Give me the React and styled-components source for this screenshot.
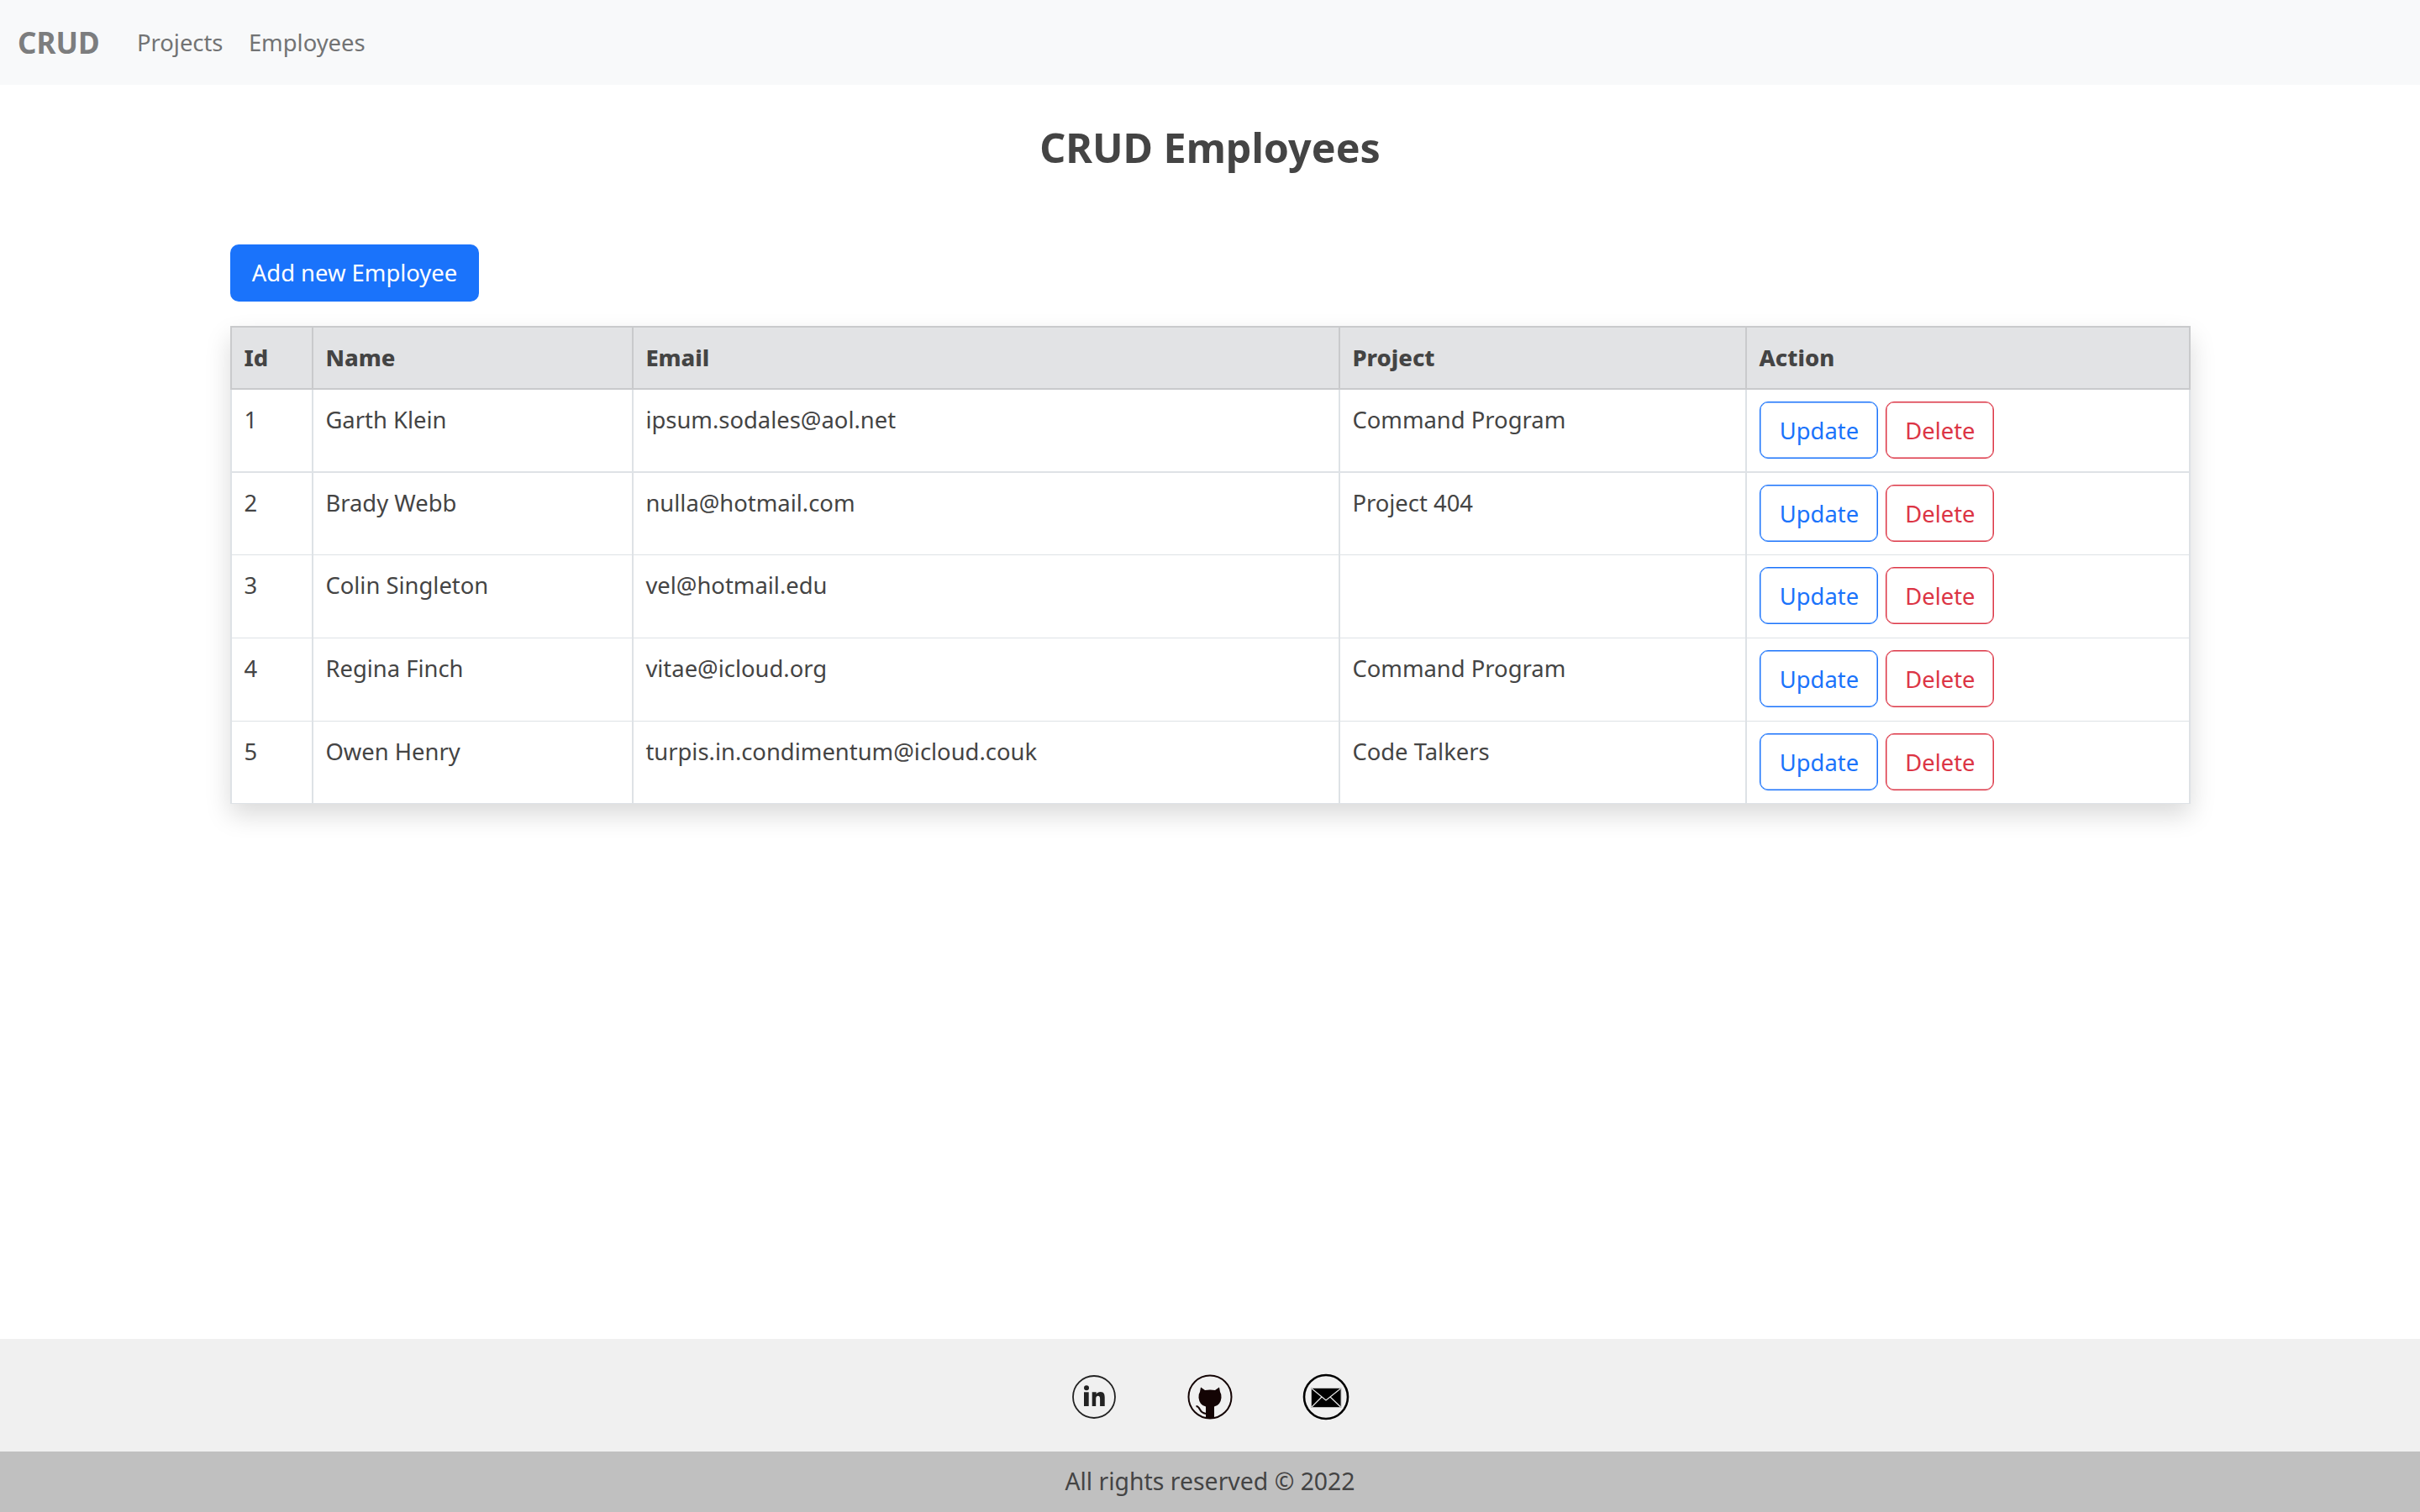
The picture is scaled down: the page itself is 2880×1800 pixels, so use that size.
import React from "react";
import styled, { createGlobalStyle } from "styled-components";

const FONT = `"Noto Sans", "Lato", sans-serif`;

const Global = createGlobalStyle`
  html, body { margin: 0; padding: 0; background: #fff; }
  body { font-family: ${FONT}; font-size: 27.4px; font-weight: 400; line-height: 43.2px; color: #444; }
  * { box-sizing: border-box; }
`;
const Page = styled.div`
  min-height: 1800px;
  display: flex;
  flex-direction: column;
`;
const Navbar = styled.nav`
  height: 101px;
  background: #f8f9fa;
  display: flex;
  align-items: center;
  padding-left: 21px;
`;
const Brand = styled.a`
  font-size: 35px;
  font-weight: 700;
  color: #7c7d7e;
  margin-right: 30px;
`;
const NavLink = styled.a`
  color: #727374;
  margin: 0 16px 0 14.4px;
`;
const Main = styled.main`
  flex: 1;
  padding: 0 274px;
`;
const Title = styled.h2`
  margin: 0;
  padding-top: 42px;
  height: 190px;
  text-align: center;
  font-size: 48.4px;
  line-height: 65px;
  font-weight: 700;
  color: #444;
`;
const AddButton = styled.button`
  display: block;
  height: 68px;
  width: 296px;
  padding: 0;
  border: 0;
  border-radius: 10px;
  background: #1a73fb;
  color: #fff;
  font: inherit;
`;
const Table = styled.table`
  width: 2331px;
  margin-top: 29px;
  border-collapse: collapse;
  table-layout: fixed;
  box-shadow: 0 14.4px 28.8px rgba(0, 0, 0, 0.15);
`;
const Head = styled.th`
  height: 74px;
  padding: 0 14.4px;
  background: #e2e3e5;
  border: 2px solid #c9cacc;
  text-align: left;
  font-weight: 800;
  color: #444;
`;
const Row = styled.tr`
  height: ${(p) => p.$h}px;
`;
const Cell = styled.td`
  padding: 14.4px;
  vertical-align: top;
  border-left: 2px solid #dee2e6;
  border-right: 2px solid #dee2e6;
  border-bottom: ${(p) => (p.$first ? 2 : 1)}px solid #dee2e6;
  color: #444;
`;
const ActionGroup = styled.div`
  display: flex;
  gap: 9px;
  padding-left: 1px;
`;
const Outline = styled.button`
  height: 68px;
  width: ${(p) => p.$w}px;
  padding: 0;
  border: 1px solid ${(p) => p.$c};
  box-shadow: inset 0 0 0 0.5px ${(p) => p.$c};
  border-radius: 10px;
  background: transparent;
  color: ${(p) => p.$c};
  font: inherit;
`;
const Social = styled.div`
  height: 134px;
  padding-top: 4px;
  background: #f0f0f0;
  display: flex;
  justify-content: center;
  align-items: center;
  gap: 84px;
`;
const Copy = styled.footer`
  height: 72px;
  background: #c0c0c0;
  display: flex;
  justify-content: center;
  align-items: center;
  color: #444;
  font-size: 28.4px;
`;

const LinkedIn = () => (
  <svg width="54" height="54" viewBox="0 0 54 54">
    <circle cx="27" cy="27" r="25" fill="none" stroke="#222" strokeWidth="1.8" />
    <circle cx="18" cy="16.3" r="3" fill="#222" />
    <rect x="15" y="21.3" width="5.7" height="16.7" fill="#222" />
    <path d="M24.7 21.3h5v2.4c1-1.8 2.8-2.8 5-2.8 4 0 5 2.8 5 6.6V38h-5.6v-9c0-2-.6-3.3-2.3-3.3s-2.6 1.3-2.6 3.3v9h-4.500z" fill="#222" />
  </svg>
);
const GitHub = () => (
  <svg width="54" height="54" viewBox="0 0 54 54">
    <defs>
      <clipPath id="gh"><circle cx="27" cy="27" r="25.5" /></clipPath>
    </defs>
    <circle cx="27" cy="27" r="25.5" fill="none" stroke="#140404" strokeWidth="2" />
    <g clipPath="url(#gh)">
      <path fill="#140404" d="M16 15.5L21 19Q27 18 33 19L38 15.5L39 21Q41 24 40.5 28Q39.5 37 32 38.5V53H22V38.5Q14.5 37 13.5 28Q13 24 15 21Z" />
      <path fill="none" stroke="#140404" strokeWidth="2" d="M10.5 38Q13 38 15 42Q17 46 22 47" />
    </g>
  </svg>
);
const Mail = () => (
  <svg width="54" height="54" viewBox="1 1 54 54" overflow="visible">
    <circle cx="28" cy="28" r="26" fill="#f0f0f0" stroke="#000" strokeWidth="2.6" />
    <rect x="10.5" y="17.5" width="35.5" height="23" fill="#000" stroke="#bbb" strokeWidth="1" />
    <path d="M11 18L28 32L45.5 18M11 40L23 28M45.5 40L33 28" fill="none" stroke="#e8e8e8" strokeWidth="1.2" />
  </svg>
);

const rows = [
  [1, "Garth Klein", "ipsum.sodales@aol.net", "Command Program"],
  [2, "Brady Webb", "nulla@hotmail.com", "Project 404"],
  [3, "Colin Singleton", "vel@hotmail.edu", ""],
  [4, "Regina Finch", "vitae@icloud.org", "Command Program"],
  [5, "Owen Henry", "turpis.in.condimentum@icloud.couk", "Code Talkers"],
];
const cols = [97, 381, 841, 484, 528];
const rowHeights = [99, 98, 99, 99, 98];

export default function App() {
  return (
    <Page>
      <Global />
      <Navbar>
        <Brand>CRUD</Brand>
        <NavLink>Projects</NavLink>
        <NavLink>Employees</NavLink>
      </Navbar>
      <Main>
        <Title>CRUD Employees</Title>
        <AddButton>Add new Employee</AddButton>
        <Table>
          <colgroup>
            {cols.map((w, i) => (
              <col key={i} width={w} />
            ))}
          </colgroup>
          <thead>
            <tr>
              {["Id", "Name", "Email", "Project", "Action"].map((h) => (
                <Head key={h}>{h}</Head>
              ))}
            </tr>
          </thead>
          <tbody>
            {rows.map((r, i) => (
              <Row key={r[0]} $h={rowHeights[i]}>
                {r.map((c, j) => (
                  <Cell key={j} $first={i === 0}>{c}</Cell>
                ))}
                <Cell $first={i === 0}>
                  <ActionGroup>
                    <Outline $c="#1a73fb" $w={141}>Update</Outline>
                    <Outline $c="#dc3545" $w={129}>Delete</Outline>
                  </ActionGroup>
                </Cell>
              </Row>
            ))}
          </tbody>
        </Table>
      </Main>
      <Social>
        <LinkedIn />
        <GitHub />
        <Mail />
      </Social>
      <Copy>All rights reserved © 2022</Copy>
    </Page>
  );
}
